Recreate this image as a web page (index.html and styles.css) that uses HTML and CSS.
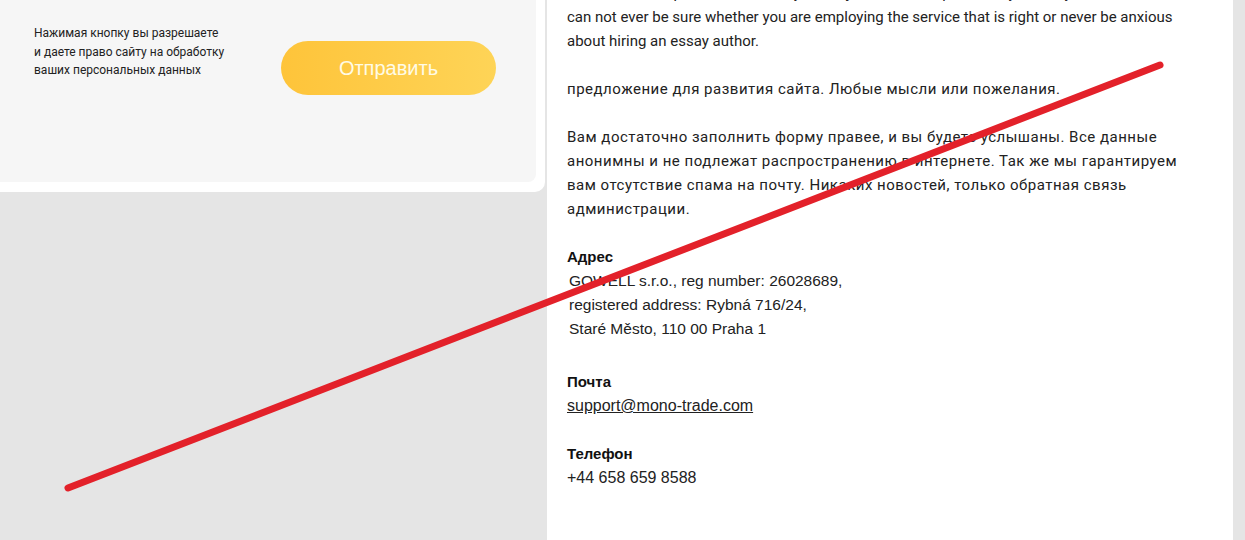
FILE: index.html
```html
<!DOCTYPE html>
<html lang="ru">
<head>
    <meta charset="UTF-8">
    <meta name="viewport" content="width=device-width, initial-scale=1.0">
    <title>Обратная связь</title>
    <link rel="stylesheet" href="styles.css">
</head>
<body>

    <div class="page">
        <!-- форма -->
        <div class="form-card">
            <div class="form-panel">
                <p class="agree-text">Нажимая кнопку вы разрешаете<br>и даете право сайту на обработку<br>ваших персональных данных</p>
                <button class="send-btn">Отправить</button>
            </div>
        </div>

        <!-- информация -->
        <div class="info-panel">
            <div class="info-content">
                <p>Our writers are qualified in a variety of subjects and disciplines, so you really</p>
                <p class="para">can not ever be sure whether you are employing the service that is right or never be anxious about hiring an essay author.</p>
                <p class="para ru">предложение для развития сайта. Любые мысли или пожелания.</p>
                <p class="para ru">Вам достаточно заполнить форму правее, и вы будете услышаны. Все данные<br>анонимны и не подлежат распространению в интернете. Так же мы гарантируем<br>вам отсутствие спама на почту. Никаких новостей, только обратная связь<br>администрации.</p>

                <div class="contact address">
                    <h4>Адрес</h4>
                    <p class="address-lines">GOWELL s.r.o., reg number: 26028689,<br>registered address: Rybná 716/24,<br>Staré Město, 110 00 Praha 1</p>
                </div>
                <div class="contact">
                    <h4>Почта</h4>
                    <p><a href="#">support@mono-trade.com</a></p>
                </div>
                <div class="contact">
                    <h4>Телефон</h4>
                    <p>+44 658 659 8588</p>
                </div>
            </div>
        </div>
    </div>

    <svg class="strike" width="1245" height="540" viewBox="0 0 1245 540">
        <line x1="68" y1="488" x2="1160" y2="65" stroke="#e3212a" stroke-width="7" stroke-linecap="round"/>
    </svg>

</body>
</html>
```

FILE: styles.css
```css
body {
    margin: 0;
    background-color: #e5e5e5;
    font-family: Roboto, 'Liberation Sans', sans-serif;
    color: #222;
    overflow: hidden;
}
.page {
    display: flex;
    align-items: flex-start;
    gap: 2px;
    height: 540px;
}
.form-card {
    width: 545px;
    flex-shrink: 0;
    background-color: #fff;
    padding: 0 9px 10px 0;
    box-sizing: border-box;
    border-radius: 0 0 10px 0;
}
.form-panel {
    height: 182px;
    display: flex;
    align-items: flex-start;
    background-color: #f6f6f6;
    border-radius: 0 0 8px 0;
    padding: 24px 0 0 34px;
    box-sizing: border-box;
}
.agree-text {
    margin: 0;
    width: 247px;
    font-size: 12px;
    line-height: 18.5px;
    color: #222;
}
.send-btn {
    margin-top: 17px;
    width: 215px;
    height: 54px;
    border: none;
    border-radius: 27px;
    background: linear-gradient(90deg, #fec43a, #fed457);
    color: #fffbe6;
    font-family: 'Liberation Sans', Arial, sans-serif;
    font-size: 20px;
    cursor: pointer;
}
.info-panel {
    width: 686px;
    height: 540px;
    flex-shrink: 0;
    background-color: #fff;
    padding: 0 20px;
    box-sizing: border-box;
    overflow: hidden;
}
.info-content {
    margin-top: -19px;
    font-size: 15px;
    line-height: 24px;
}
.info-content p {
    margin: 0;
}
.info-content .para {
    margin-bottom: 24px;
}
.info-content .ru {
    letter-spacing: 0.5px;
}
.contact {
    font-family: 'Liberation Sans', Arial, sans-serif;
    font-size: 16px;
    margin-bottom: 24px;
}
.contact.address {
    margin-bottom: 29px;
}
.contact .address-lines {
    padding-left: 2px;
    font-size: 15.5px;
}
.contact h4 {
    margin: 0;
    font-size: 15px;
    line-height: 24px;
    color: #111;
}
.contact a {
    color: #222;
}
.strike {
    position: absolute;
    left: 0;
    top: 0;
    pointer-events: none;
}
```
